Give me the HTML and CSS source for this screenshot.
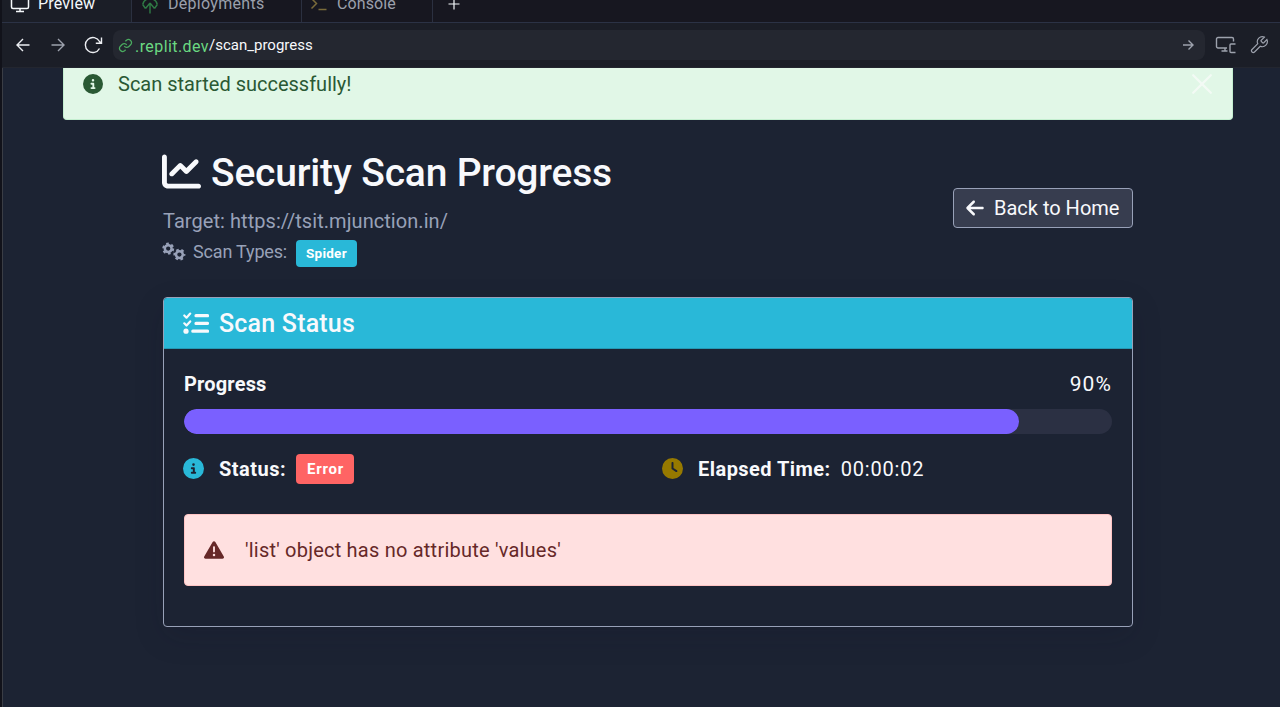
FILE: index.html
```
<!DOCTYPE html>
<html lang="en">
<head>
<meta charset="utf-8">
<title>Security Scan Progress</title>
<link rel="stylesheet" href="styles.css">
</head>
<body>
<div class="window">
  <nav class="tabs">
    <div class="tab tab-active">
      <svg class="tab-icon" viewBox="0 0 20 20" fill="none" stroke="currentColor" stroke-width="1.5"><rect x="1.500" y="2" width="17" height="12.500" rx="1.500"/><path d="M10 14.500v3M6 17.500h8"/></svg>
      <span class="t-preview">Preview</span>
    </div>
    <div class="tab tab-deploy">
      <svg class="tab-icon green" viewBox="0 0 20 20" fill="none" stroke="currentColor" stroke-width="1.4"><path d="M10 19.500V9M10 9l-4.500 5.500M10 9l4.500 5.500M2.700 10.500a7.500 7.500 0 0 1 14.600 0M2.700 10.500L5.500 14.500M17.300 10.500l-2.800 4"/></svg>
      <span class="t-deploy">Deployments</span>
    </div>
    <div class="tab tab-console">
      <svg class="tab-icon olive" viewBox="0 0 20 20" fill="none" stroke="currentColor" stroke-width="1.5"><path d="M2.500 4.500l5 5-5 5M9.500 15.500h8"/></svg>
      <span class="t-console">Console</span>
    </div>
    <div class="tab-add"><svg viewBox="0 0 12 12" stroke="currentColor" stroke-width="1.2"><path d="M6 .5v11M.5 6h11"/></svg></div>
  </nav>
  <div class="toolbar">
    <svg class="nav-icon back" viewBox="0 0 14 14"><path d="M13.500 7H1M7 1L1 7l6 6"/></svg>
    <svg class="nav-icon forward" viewBox="0 0 14 14"><path d="M.5 7H13M7 1l6 6-6 6"/></svg>
    <svg class="reload" viewBox="0 0 20 18"><path d="M16.500 12.500A7.500 7.500 0 1 1 16.500 5.500L18.500 7.200M18.500 1.500v5.700h-5.700"/></svg>
    <div class="address">
      <svg class="link" viewBox="0 0 24 24"><path d="M10 13a5 5 0 0 0 7.500.5l3-3a5 5 0 0 0-7-7l-1.700 1.700M14 11a5 5 0 0 0-7.500-.5l-3 3a5 5 0 0 0 7 7l1.700-1.700"/></svg>
      <span class="host t-host">.replit.dev</span><span class="path t-path">/scan_progress</span>
      <svg class="go" viewBox="0 0 14 14"><path d="M2 7h10M7.500 2.500L12 7l-4.500 4.500"/></svg>
    </div>
    <svg class="devices" viewBox="0 0 22 18"><path d="M12 12H3a1.500 1.500 0 0 1-1.500-1.500V3A1.500 1.500 0 0 1 3 1.500h14A1.500 1.500 0 0 1 18.500 3v2.500M10 12v3M6.500 15h6M20.500 8H16a1 1 0 0 0-1 1v6.500a1 1 0 0 0 1 1h4.500"/></svg>
    <svg class="wrench" viewBox="0 0 24 24"><path d="M14.700 6.300a1 1 0 0 0 0 1.400l1.600 1.600a1 1 0 0 0 1.400 0l3.770-3.770a6 6 0 0 1-7.940 7.940l-6.910 6.910a2.120 2.120 0 0 1-3-3l6.910-6.910a6 6 0 0 1 7.940-7.940z"/></svg>
  </div>
  <main class="page">
    <div class="notice">
      <svg class="fa info-green" viewBox="0 0 512 512"><path d="M256 512A256 256 0 1 0 256 0a256 256 0 1 0 0 512zM216 336h24V272H216c-13.300 0-24-10.700-24-24s10.700-24 24-24h48c13.300 0 24 10.700 24 24v88h8c13.300 0 24 10.700 24 24s-10.700 24-24 24H216c-13.300 0-24-10.700-24-24s10.700-24 24-24zm40-208a32 32 0 1 1 0 64 32 32 0 1 1 0-64z"/></svg>
      <span class="t-started">Scan started successfully!</span>
      <svg class="close" viewBox="0 0 20 20"><path d="M1.200 1.200l17.600 17.600M18.800 1.200L1.200 18.800"/></svg>
    </div>
    <div class="content">
      <header class="heading">
        <div class="heading-text">
          <h1><svg class="fa chart" viewBox="0 0 512 512"><path d="M64 64c0-17.700-14.300-32-32-32S0 46.300 0 64V400c0 44.200 35.800 80 80 80H480c17.700 0 32-14.300 32-32s-14.300-32-32-32H80c-8.800 0-16-7.200-16-16V64zm406.600 86.600c12.500-12.500 12.500-32.800 0-45.300s-32.800-12.500-45.300 0L320 210.700l-57.400-57.400c-12.500-12.500-32.800-12.500-45.300 0l-112 112c-12.500 12.500-12.500 32.800 0 45.300s32.800 12.500 45.300 0L240 221.300l57.400 57.400c12.500 12.500 32.800 12.500 45.300 0l128-128z"/></svg><span class="t-title">Security Scan Progress</span></h1>
          <p class="target"><span class="t-target">Target: https://tsit.mjunction.in/</span></p>
          <div class="types">
            <svg class="gears" viewBox="0 0 24 20"><g fill="none" stroke="currentColor"><circle cx="6.200" cy="6.600" r="3.400" stroke-width="2.500"/><circle cx="6.200" cy="6.600" r="5" stroke-width="2" stroke-dasharray="2.620 2.620"/><circle cx="17.400" cy="12.600" r="3.400" stroke-width="2.500"/><circle cx="17.400" cy="12.600" r="5" stroke-width="2" stroke-dasharray="2.620 2.620" stroke-dashoffset="1.300"/></g></svg>
            <span class="t-types">Scan Types:</span>
            <span class="badge badge-info"><span class="t-spider">Spider</span></span>
          </div>
        </div>
        <a class="home"><svg class="fa arrow" viewBox="0 0 448 512"><path d="M9.400 233.400c-12.500 12.500-12.500 32.800 0 45.300l160 160c12.500 12.500 32.800 12.500 45.300 0s12.500-32.800 0-45.300L109.200 288 416 288c17.700 0 32-14.300 32-32s-14.300-32-32-32l-306.700 0L214.600 118.600c12.500-12.500 12.500-32.800 0-45.300s-32.800-12.500-45.300 0l-160 160z"/></svg><span class="t-home">Back to Home</span></a>
      </header>
      <section class="card">
        <h2 class="card-header"><svg class="tasks" viewBox="0 0 26 22" fill="none" stroke="currentColor" stroke-linecap="round" stroke-linejoin="round"><path d="M1.300 3.500l2.200 2.200L7.200 1.600M1.300 11.300l2.200 2.200L7.200 9.400" stroke-width="2.200"/><path d="M13 3.700h11.500M13 11.400h11.500M9.800 19.200h14.700" stroke-width="3.200"/><circle cx="3" cy="19.200" r="2.600" fill="currentColor" stroke="none"/></svg><span class="t-status">Scan Status</span></h2>
        <div class="card-body">
          <div class="row progress-label"><strong class="t-progress">Progress</strong><span class="t-percent">90%</span></div>
          <div class="track"><div class="bar" style="width:90%"></div></div>
          <div class="facts">
            <div class="fact"><svg class="fa cyan" viewBox="0 0 512 512"><path d="M256 512A256 256 0 1 0 256 0a256 256 0 1 0 0 512zM216 336h24V272H216c-13.300 0-24-10.700-24-24s10.700-24 24-24h48c13.300 0 24 10.700 24 24v88h8c13.300 0 24 10.700 24 24s-10.700 24-24 24H216c-13.300 0-24-10.700-24-24s10.700-24 24-24zm40-208a32 32 0 1 1 0 64 32 32 0 1 1 0-64z"/></svg><strong class="t-state">Status:</strong><span class="badge badge-error"><span class="t-error">Error</span></span></div>
            <div class="fact"><svg class="fa amber" viewBox="0 0 512 512"><path d="M256 0a256 256 0 1 1 0 512A256 256 0 1 1 256 0zM232 120V256c0 8 4 15.500 10.700 20l96 64c11 7.400 25.900 4.400 33.300-6.700s4.400-25.900-6.700-33.300L280 243.200V120c0-13.300-10.700-24-24-24s-24 10.700-24 24z"/></svg><strong class="t-elapsed">Elapsed Time:</strong><span class="time t-time">00:00:02</span></div>
          </div>
          <div class="error"><svg class="fa" viewBox="0 0 512 512"><path d="M256 32c14.200 0 27.300 7.500 34.500 19.800l216 368c7.300 12.400 7.300 27.700 .2 40.100S486.300 480 472 480H40c-14.300 0-27.600-7.700-34.700-20.100s-7-27.800 .2-40.100l216-368C228.700 39.500 241.800 32 256 32zm0 128c-13.300 0-24 10.700-24 24V296c0 13.300 10.700 24 24 24s24-10.700 24-24V184c0-13.300-10.700-24-24-24zm32 224a32 32 0 1 0 -64 0 32 32 0 1 0 64 0z"/></svg><span class="t-message">'list' object has no attribute 'values'</span></div>
        </div>
      </section>
    </div>
  </main>
</div>
</body>
</html>
```
FILE: styles.css
```
* { box-sizing: border-box; }
body { margin: 0; background: #1c2333; color: #f8f9fc; font: 20px/30px Roboto, "Noto Sans", sans-serif; overflow: hidden; }
.window { height: 707px; padding-left: 2px; background: #11121a; display: flex; flex-direction: column; }
svg { flex: none; display: block; }
.tabs { height: 23px; flex: none; overflow: hidden; display: flex; align-items: flex-end; background: #171720; font-size: 16px; color: #9ba0ac; border-bottom: 1px solid #2b3245; }
.tab { height: 37px; flex: none; display: flex; align-items: center; gap: 8px; border-right: 1px solid #2b3040; }
.tab-active { width: 130px; height: 38px; margin-bottom: -1px; padding-left: 8px; background: #1b1e27; color: #f5f9fc; }
.tab-deploy { width: 170px; padding-left: 8px; }
.tab-console { width: 131px; padding-left: 7px; }
.tab-icon { width: 20px; height: 20px; }
.green { color: #2f7a45; }
.olive { color: #7a6b3a; }
.tab-add { height: 37px; margin-left: 15px; color: #f5f9fc; display: flex; align-items: center; }
.tab-add svg { width: 12px; height: 12px; }
.toolbar { height: 45px; flex: none; display: flex; align-items: center; padding: 0 11px 0 14px; background: #1b1e27; border-bottom: 1px solid #23262f; }
.toolbar svg { fill: none; stroke: #9da2ad; stroke-width: 1.4; }
.nav-icon { width: 14px; height: 14px; }
.toolbar .back { stroke: #eceef2; }
.forward { margin-left: 21px; }
.toolbar .reload { width: 20px; height: 18px; margin-left: 18px; stroke: #eceef2; }
.address { height: 30px; width: 1094px; margin-left: 10px; padding: 0 10px 0 5px; display: flex; align-items: center; border-radius: 8px; background: #242730; font-size: 15px; }
.toolbar .link { width: 15px; height: 15px; stroke: #4aa95f; stroke-width: 2; margin-right: 2px; }
.host { color: #6bd982; font-size: 16px; padding-top: 3px; }
.go { width: 14px; height: 14px; margin-left: auto; }
.devices { width: 22px; height: 18px; margin-left: 10px; }
.wrench { width: 20px; height: 20px; margin-left: 12px; }
.page { flex: 1; min-height: 0; border-left: 1px solid #3a3d45; background: #1c2333; overflow: hidden; padding: 0 47px 0 60px; }
.notice { height: 52px; display: flex; align-items: flex-start; padding: 1px 20px 1px 19px; background: #e1f7e7; border: 1px solid #c4efd0; border-top: 0; border-radius: 0 0 4px 4px; color: #2a5934; }
.fa { width: 20px; height: 20px; fill: currentColor; }
.info-green { margin: 5px 15px 0 0; }
.notice .close { width: 20px; height: 20px; margin: 5px 0 0 auto; stroke: #f3faf5; stroke-width: 2.200; stroke-linecap: round; }
.content { width: 970px; margin: 28px auto 0; }
.heading { height: 119px; display: flex; justify-content: space-between; align-items: center; }
h1 { margin: 0 0 10px -1px; height: 48px; font-size: 39px; line-height: 48px; font-weight: 500; display: flex; align-items: center; padding-top: 2px; }
.chart { width: 39px; height: 39px; margin: -3px 10px 0 0; }
.target { margin: 0; color: #98a1b8; }
.types { display: flex; align-items: center; color: #98a1b8; font-size: 18px; height: 32px; }
.gears { width: 24px; height: 20px; margin: 0 7px 0 -1px; }
.badge { display: flex; align-items: center; border-radius: 4px; color: #fff; font-weight: 700; }
.badge-info { height: 27px; margin: 3px 0 0 9px; padding: 0 10px; font-size: 13.500px; background: #29b8d8; }
.badge-error { height: 30px; margin-left: 10px; padding: 0 10px 0 11px; font-size: 15px; background: #ff6464; }
.home { height: 40px; width: 180px; margin-top: 1px; padding: 0 12px; display: flex; align-items: center; gap: 10px; border: 1px solid #98a1b8; border-radius: 4px; background: #373d4f; white-space: nowrap; }
.arrow { width: 18px; height: 20px; }
.card { height: 330px; margin-top: 30px; border: 1px solid #98a1b8; border-radius: 4px; box-shadow: 0 10px 30px rgba(20, 22, 40, .15); }
.card-header { height: 51px; margin: 0; padding: 1px 19px 0; display: flex; align-items: center; background: #29b8d8; border-bottom: 1px solid #2499b5; border-radius: 3px 3px 0 0; font-size: 25px; font-weight: 500; }
.tasks { width: 26px; height: 22px; margin: -2px 10px 0 0; }
.card-body { padding: 20px; }
.row { display: flex; justify-content: space-between; }
.track { height: 25px; margin-top: 10px; border-radius: 13px; background: #2b3043; overflow: hidden; }
.bar { height: 25px; border-radius: 13px; background: #7a60ff; }
.facts { display: grid; grid-template-columns: 479px 1fr; margin-top: 20px; }
.fact { display: flex; align-items: center; height: 30px; }
.fact .fa { margin: -1px 15px 0 -1px; width: 21px; height: 21px; }
.cyan { color: #29b8d8; }
.amber { color: #967900; }
.time { margin-left: 10px; }
.error { height: 72px; margin-top: 30px; padding: 0 19px; display: flex; align-items: center; gap: 21px; border: 1px solid #ffc4c4; border-radius: 4px; background: #ffe0e0; color: #662828; }

.t-preview { letter-spacing: .2px; }
.t-deploy { letter-spacing: .3px; }
.t-console { letter-spacing: .12px; }
.t-host { letter-spacing: .42px; }
.t-title { letter-spacing: -.2px; }
.t-target { letter-spacing: .06px; }
.t-types { letter-spacing: -.17px; }
.t-spider { letter-spacing: .25px; }
.t-status { letter-spacing: .2px; }
.t-progress { letter-spacing: .18px; }
.t-percent { font-size: 21px; letter-spacing: 1.100px; }
.t-state { letter-spacing: .48px; }
.t-error { letter-spacing: .77px; }
.t-elapsed { letter-spacing: .46px; }
.t-time { letter-spacing: .82px; }
.t-message { letter-spacing: .22px; }
```
